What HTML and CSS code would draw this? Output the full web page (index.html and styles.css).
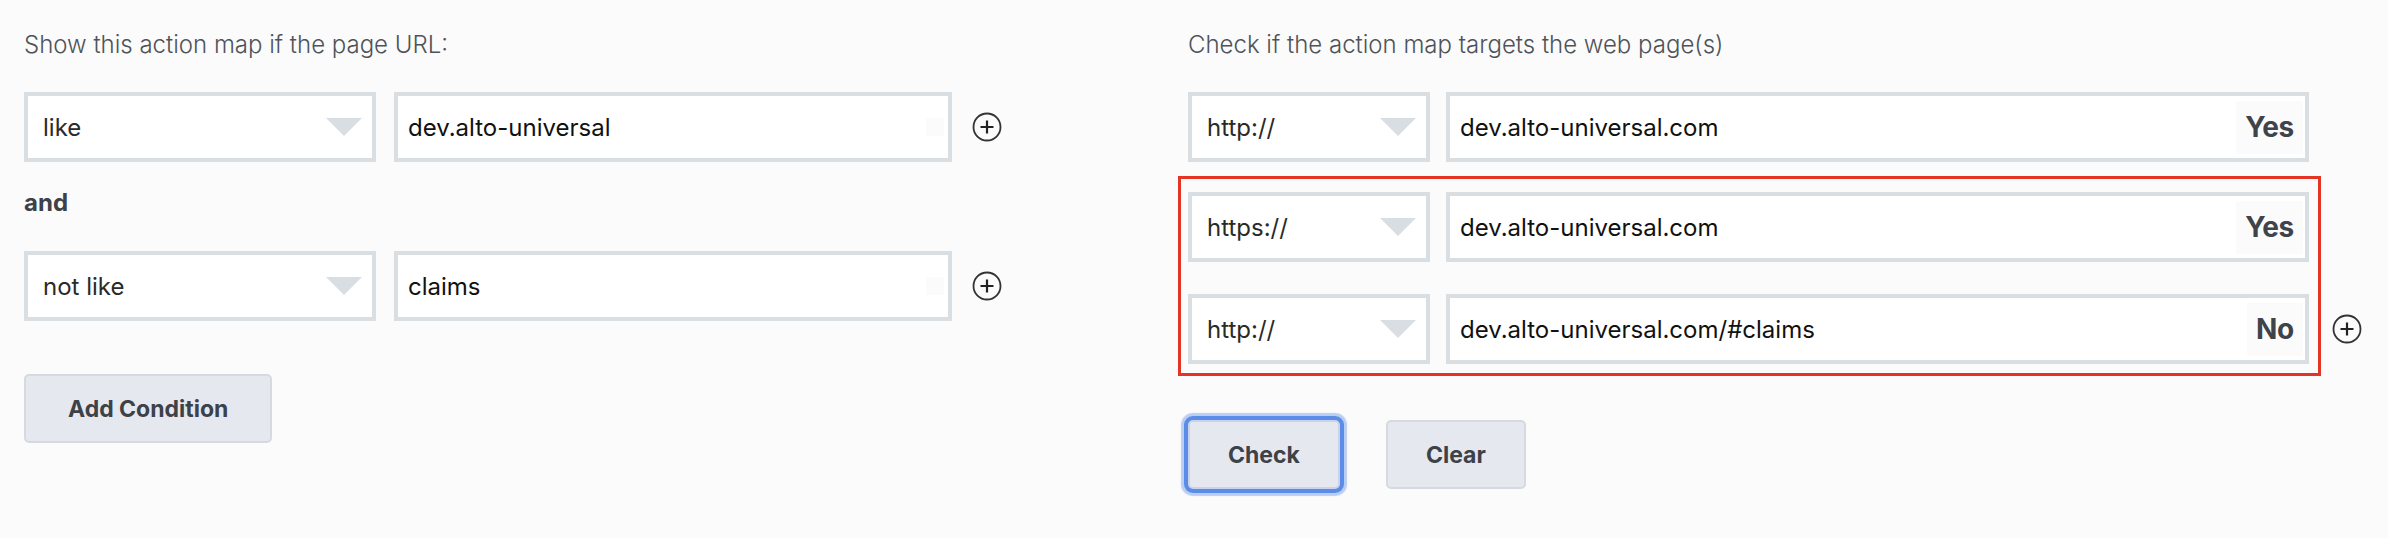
FILE: index.html
```html
<!DOCTYPE html>
<html lang="en">
<head>
    <meta charset="UTF-8">
    <meta name="viewport" content="width=device-width, initial-scale=1.0">
    <title>Action Map Targeting</title>
    <link rel="stylesheet" href="styles.css">
</head>
<body>
    <div class="page">
        <!-- URL conditions -->
        <section class="col col-left">
            <p class="label">Show this action map if the page URL:</p>
            <div class="row">
                <div class="select sel-wide">like<span class="caret"></span></div>
                <div class="field field-wide"><span class="value">dev.alto-universal</span><span class="result"></span></div>
                <span class="add">
                    <svg width="30" height="30" viewBox="0 0 30 30"><circle cx="15" cy="15" r="13.5" fill="none" stroke="#333" stroke-width="1.8"/><path d="M15 8.5v13M8.5 15h13" stroke="#222" stroke-width="2.2"/></svg>
                </span>
            </div>
            <p class="joiner">and</p>
            <div class="row">
                <div class="select sel-wide">not like<span class="caret"></span></div>
                <div class="field field-wide"><span class="value">claims</span><span class="result"></span></div>
                <span class="add">
                    <svg width="30" height="30" viewBox="0 0 30 30"><circle cx="15" cy="15" r="13.5" fill="none" stroke="#333" stroke-width="1.8"/><path d="M15 8.5v13M8.5 15h13" stroke="#222" stroke-width="2.2"/></svg>
                </span>
            </div>
            <div class="actions actions-left">
                <button class="btn btn-wide">Add Condition</button>
            </div>
        </section>

        <!-- test URLs -->
        <section class="col col-right">
            <p class="label">Check if the action map targets the web page(s)</p>
            <div class="row row-test">
                <div class="select sel-narrow">http://<span class="caret"></span></div>
                <div class="field field-long"><span class="value">dev.alto-universal.com</span><span class="result">Yes</span></div>
            </div>
            <div class="highlight">
                <div class="row row-test">
                    <div class="select sel-narrow">https://<span class="caret"></span></div>
                    <div class="field field-long"><span class="value">dev.alto-universal.com</span><span class="result">Yes</span></div>
                </div>
                <div class="row row-test row-last">
                    <div class="select sel-narrow">http://<span class="caret"></span></div>
                    <div class="field field-long"><span class="value">dev.alto-universal.com/#claims</span><span class="result">No</span></div>
                    <span class="add add-right">
                        <svg width="30" height="30" viewBox="0 0 30 30"><circle cx="15" cy="15" r="13.5" fill="none" stroke="#333" stroke-width="1.8"/><path d="M15 8.5v13M8.5 15h13" stroke="#222" stroke-width="2.2"/></svg>
                    </span>
                </div>
            </div>
            <div class="actions actions-right">
                <button class="btn btn-focus">Check</button>
                <button class="btn">Clear</button>
            </div>
        </section>
    </div>
</body>
</html>
```

FILE: styles.css
```css
html, body { margin: 0; padding: 0; background-color: #fbfbfb; }
body { font-family: Inter, "Liberation Sans", sans-serif; color: #222; }
.page { display: grid; grid-template-columns: 1164px 1fr; padding: 30px 24px 40px; }
.col { display: flex; flex-direction: column; align-items: flex-start; }

.label { margin: 0 0 32px; font-size: 24px; line-height: 30px; font-weight: 300; color: #4f5359; }
.joiner { margin: 26px 0 33px; font-size: 24px; line-height: 30px; font-weight: 700; color: #3d4148; }

.row { display: flex; align-items: center; gap: 18px; }
.row > * { flex-shrink: 0; }
.row-test { gap: 16px; }

.select {
    box-sizing: border-box;
    height: 70px;
    display: flex;
    align-items: center;
    justify-content: space-between;
    padding: 0 10px 0 15px;
    border: 4px solid #d9dee3;
    background-color: #fff;
    font-size: 24px;
    color: #2a2a2a;
}
.sel-wide { width: 352px; }
.sel-narrow { width: 242px; }
.caret { width: 0; height: 0; border-left: 18px solid transparent; border-right: 18px solid transparent; border-top: 18px solid #d9dee3; }

.field {
    box-sizing: border-box;
    height: 70px;
    display: flex;
    align-items: center;
    justify-content: space-between;
    padding: 0 2px 0 10px;
    border: 4px solid #d9dee3;
    background-color: #fff;
    font-size: 24px;
    color: #111;
}
.field-wide { width: 558px; }
.field-long { width: 863px; }
.result { display: block; padding: 9px; line-height: 35px; background-color: #fbfbfb; font-size: 28px; font-weight: 700; color: #3f434a; letter-spacing: -0.3px; }
.result:empty { padding: 9px; line-height: 0; margin-right: 2px; }

.add { display: flex; margin-left: 2px; }
.add-right { margin-left: 7px; }

.highlight { margin: 14px 0 0 -10px; width: 1143px; box-sizing: border-box; border: 3px solid #e33424; padding: 13px 9px 9px 7px; }
.row-last { margin-top: 32px; }

.actions { display: flex; gap: 46px; }
.actions-left { margin-top: 53px; }
.actions-right { margin-top: 44px; }

.btn {
    height: 69px;
    padding: 0 38px;
    border: 2px solid #d6dae0;
    border-radius: 5px;
    background-color: #e5e8ef;
    font-family: Inter, "Liberation Sans", sans-serif;
    font-size: 23px;
    font-weight: 700;
    color: #3d4148;
    cursor: pointer;
}
.btn-wide { padding: 0 42px; }
.btn-focus { border-color: #c9d4ea; box-shadow: 0 0 0 4px #5b8ce8, 0 0 1px 7px rgba(91, 140, 232, 0.4); }
```
